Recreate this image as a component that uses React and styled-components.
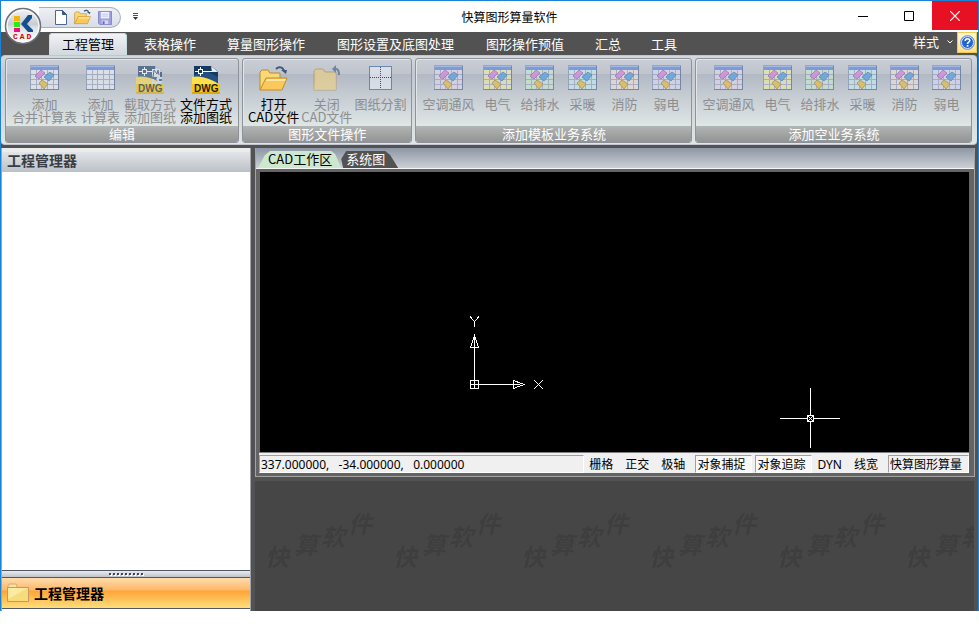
import React from 'react';
import styled, { createGlobalStyle } from 'styled-components';

const MENU_TABS = [
  { label: '工程管理', active: true },
  { label: '表格操作' },
  { label: '算量图形操作', wide: true },
  { label: '图形设置及底图处理', wide: true },
  { label: '图形操作预值', wide: true },
  { label: '汇总' },
  { label: '工具' },
];

const SYSTEMS = [
  { label: '空调通风', tint: '#e6d9ec' },
  { label: '电气', tint: '#f2f0a4' },
  { label: '给排水', tint: '#c8efce' },
  { label: '采暖', tint: '#c6f1f4' },
  { label: '消防', tint: '#f7e2d6' },
  { label: '弱电', tint: '#dcdcf6' },
];

const STATUS_ITEMS = [
  { label: '栅格' },
  { label: '正交' },
  { label: '极轴' },
  { label: '对象捕捉', pressed: true },
  { label: '对象追踪', pressed: true },
  { label: 'DYN' },
  { label: '线宽' },
  { label: '快算图形算量', sunken: true },
];

const TableIcon = ({ tint = '#eef1f8', items = true }) => (
  <svg width='29' height='26' viewBox='0 0 29 26'>
    <rect x='0.5' y='0.5' width='28' height='24' fill={tint} stroke='#7d8fb4' />
    <rect x='1' y='1' width='27' height='4' fill='#4f7fe0' />
    <rect x='1' y='1' width='27' height='1' fill='#8fb0f0' />
    <path
      d='M1 9.5h27M1 14.5h27M1 19.5h27M6.5 5v19M11.5 5v19M17.5 5v19M23.5 5v19'
      stroke='#98a4c0'
      fill='none'
    />
    <path d='M0 24.5h29M28.5 1v24' stroke='#45608a' fill='none' />
    {items && (
      <g>
        <path d='M5 11l6-6 4 3-6 6z' fill='#dc7ce6' stroke='#8e4a9e' strokeWidth='0.8' />
        <path d='M14 12l6-5 4 3-5 6z' fill='#459ceb' stroke='#27619e' strokeWidth='0.8' />
        <path d='M9 18l3-3 6 4-4 5z' fill='#efbc30' stroke='#94731c' strokeWidth='0.8' />
      </g>
    )}
  </svg>
);

const DwgIcon = ({ pick }) => (
  <svg width='28' height='29' viewBox='0 0 28 29'>
    <path d='M2 1h17l7 6v21H2z' fill='#245080' />
    <path d='M2 1h17l7 6v5L14 6 2 10z' fill='#153a62' />
    <path d='M19 1l7 6h-6z' fill='#e8eef4' />
    <path d='M0 12C9 10 20 14 28 20v8H0z' fill='#ffe04a' />
    <path d='M0 19h28v9H0z' fill='#f9c80e' />
    <path d='M0 28h28' stroke='#b88a00' />
    <g stroke='#fff' fill='none'>
      <rect x='6.5' y='4.5' width='4' height='4' />
      <path d='M3 6.5h3M11 6.5h9M8.5 2v2M8.5 9v2' />
    </g>
    {pick && (
      <g>
        <rect x='16' y='4' width='8' height='8' fill='#e9eef8' />
        <path d='M17 12l1-7 3 4 1-4 1 5' stroke='#23406a' fill='none' />
        <path d='M17 14v4h4M26 13h-4v4h4M23 11l-2 4' stroke='#dce6fa' strokeWidth='2' fill='none' />
      </g>
    )}
    <text
      x='2'
      y='27'
      fontFamily='Liberation Sans, Arial, sans-serif'
      fontSize='10'
      fontWeight='bold'
      fill='#1d1a0a'
    >
      DWG
    </text>
  </svg>
);

const OpenFolderIcon = ({ size = 29 }) => (
  <svg width={size} height={size} viewBox='0 0 29 29'>
    <path d='M1 25V7l2-2h6l2 3h10v5' fill='#f9d878' stroke='#b98a2e' />
    <path d='M1 25l6-12h21l-5 12z' fill='#fbc95a' stroke='#c58a25' />
    <path d='M8 14h19l-1 2H7z' fill='#fde7a6' />
    <path d='M17 4c3-3 7-2 8 2' stroke='#3f587c' strokeWidth='2' fill='none' />
    <path d='M22 5h6l-1 4z' fill='#3f587c' />
  </svg>
);

const ClosedFolderIcon = () => (
  <svg width='29' height='29' viewBox='0 0 29 29'>
    <path d='M2 25V6l2-2h7l2 3h11v18z' fill='#efcd78' stroke='#ad8b4a' />
    <path d='M2 25h22V9H4z' fill='#f4d684' opacity='0.7' />
    <path d='M22 4c4-1 5 2 5 6' stroke='#33598e' strokeWidth='2' fill='none' />
    <path d='M24 0v8l-4-4z' fill='#33598e' />
  </svg>
);

const SplitIcon = () => (
  <svg width='23' height='26' viewBox='0 0 23 26'>
    <rect x='0.5' y='1.5' width='22' height='23' fill='#e9eef8' stroke='#2f62a0' />
    <path d='M11.5 2v22M1 12.5h21' stroke='#000' strokeDasharray='1 1' />
  </svg>
);

const PanelFolderIcon = () => (
  <svg width='22' height='20' viewBox='0 0 22 20'>
    <path d='M1 3l1-2h7l1 2v3H1z' fill='#fbe3a4' stroke='#dba66a' />
    <path d='M0.5 4.5h21v14H.5z' fill='#f6dc7c' stroke='#c79a5c' />
    <path d='M1 5h20L1 16z' fill='#fdf0ae' opacity='0.7' />
  </svg>
);

const AppLogo = () => (
  <svg width='38' height='38' viewBox='0 0 38 38'>
    <defs>
      <linearGradient id='orb' x1='0' y1='0' x2='0' y2='1'>
        <stop offset='0' stopColor='#f4f5f7' />
        <stop offset='0.45' stopColor='#c9cdd3' />
        <stop offset='0.55' stopColor='#dfe3e6' />
        <stop offset='1' stopColor='#ffffff' />
      </linearGradient>
    </defs>
    <circle cx='19' cy='19' r='17.5' fill='url(#orb)' stroke='#6c7078' strokeWidth='1.5' />
    <circle cx='19' cy='19' r='16' fill='none' stroke='#fff' />
    <rect x='10' y='9' width='6' height='5' fill='#f5b40a' />
    <rect x='10' y='15' width='6' height='5' fill='#2ee81c' />
    <rect x='10' y='21' width='6' height='4' fill='#f0107c' />
    <path d='M28 8h-4l-7 9 7 8h5v-2l-6-6 5-6z' fill='#14508c' />
    <text
      x='9'
      y='32'
      fontFamily='Liberation Mono, monospace'
      fontSize='8'
      fontWeight='bold'
      letterSpacing='2'
      fill='#e00000'
    >
      CAD
    </text>
  </svg>
);

const App = () => {
  return (
    <>
      <GlobalStyle />
      <Window>
        <TitleBar>
          <LogoButton aria-label='CAD'>
            <AppLogo />
          </LogoButton>
          <QuickArea>
            <QuickAccess>
              <QuickButton aria-label='新建'>
                <svg width='12' height='15' viewBox='0 0 12 15'>
                  <path d='M.5.5h7l4 4v10H.5z' fill='#fff' stroke='#4b6890' />
                  <path d='M7.5.5v4h4z' fill='#3d5a86' stroke='#3d5a86' />
                </svg>
              </QuickButton>
              <QuickButton aria-label='打开'>
                <OpenFolderIcon size={17} />
              </QuickButton>
              <QuickButton aria-label='保存'>
                <svg width='14' height='14' viewBox='0 0 15 15'>
                  <path d='M.5.5h14v14H2L.5 13z' fill='#9ca0de' stroke='#8084c8' />
                  <rect x='3' y='1' width='9' height='7' fill='#edf0fc' />
                  <path d='M4 3.5h7M4 5.5h7' stroke='#c2c8e8' />
                  <rect x='4' y='10' width='7' height='4' fill='#d4d8f0' />
                  <rect x='5' y='11' width='2' height='3' fill='#666bb0' />
                </svg>
              </QuickButton>
            </QuickAccess>
            <QuickButton aria-label='自定义'>
              <svg width='5' height='7' viewBox='0 0 5 7'>
                <path d='M0 .5h5M0 2.5h5' stroke='#555' />
                <path d='M0 4h5L2.5 7z' fill='#333' />
              </svg>
            </QuickButton>
          </QuickArea>
          <Title>快算图形算量软件</Title>
          <WindowButton aria-label='最小化'>
            <svg width='10' height='10' viewBox='0 0 10 10'>
              <path d='M0 5.5h10' stroke='#000' />
            </svg>
          </WindowButton>
          <WindowButton aria-label='最大化'>
            <svg width='10' height='10' viewBox='0 0 10 10'>
              <path d='M.5.5h9v9h-9z' stroke='#000' fill='none' />
            </svg>
          </WindowButton>
          <WindowButton $close aria-label='关闭'>
            <svg width='10' height='10' viewBox='0 0 10 10'>
              <path d='M0 0l10 10M10 0L0 10' stroke='#fff' strokeWidth='1.2' />
            </svg>
          </WindowButton>
        </TitleBar>

        <MenuBar>
          {MENU_TABS.map((tab) => (
            <MenuTab key={tab.label} $active={tab.active} $wide={tab.wide}>
              {tab.label}
            </MenuTab>
          ))}
          <StyleButton>
            样式
            <svg width='6' height='4' viewBox='0 0 6 4'>
              <path d='M.5.5L3 3 5.5.5' stroke='#fff' fill='none' />
            </svg>
          </StyleButton>
          <HelpButton aria-label='帮助'>
            <svg width='15' height='15' viewBox='0 0 15 15'>
              <circle cx='7.5' cy='7.5' r='7' fill='#2464d0' stroke='#96a4bc' />
              <circle cx='7.5' cy='7.5' r='6' fill='none' stroke='#dce8fa' />
              <path
                d='M5.2 6c0-3 4.6-3 4.6-.4C9.8 7.2 7.5 7 7.5 9'
                stroke='#fff'
                strokeWidth='1.6'
                fill='none'
              />
              <rect x='6.7' y='10' width='1.7' height='1.7' fill='#fff' />
            </svg>
          </HelpButton>
        </MenuBar>

        <Ribbon>
          <Group>
            <GroupItems>
              <Tool disabled>
                <TableIcon />
                <ToolLabel>添加<br />合并计算表</ToolLabel>
              </Tool>
              <Tool disabled>
                <TableIcon items={false} />
                <ToolLabel>添加<br />计算表</ToolLabel>
              </Tool>
              <Tool disabled>
                <DwgIcon pick />
                <ToolLabel>截取方式<br />添加图纸</ToolLabel>
              </Tool>
              <Tool>
                <DwgIcon />
                <ToolLabel>文件方式<br />添加图纸</ToolLabel>
              </Tool>
            </GroupItems>
            <GroupCaption>编辑</GroupCaption>
          </Group>
          <Group>
            <GroupItems>
              <Tool $tight>
                <OpenFolderIcon />
                <ToolLabel>打开<br />CAD文件</ToolLabel>
              </Tool>
              <Tool $tight disabled>
                <ClosedFolderIcon />
                <ToolLabel>关闭<br />CAD文件</ToolLabel>
              </Tool>
              <Tool $tight disabled>
                <SplitIcon />
                <ToolLabel>图纸分割</ToolLabel>
              </Tool>
            </GroupItems>
            <GroupCaption>图形文件操作</GroupCaption>
          </Group>
          {['添加模板业务系统', '添加空业务系统'].map((caption) => (
            <Group key={caption}>
              <GroupItems>
                {SYSTEMS.map((item) => (
                  <Tool key={item.label} disabled>
                    <TableIcon tint={item.tint} />
                    <ToolLabel>{item.label}</ToolLabel>
                  </Tool>
                ))}
              </GroupItems>
              <GroupCaption>{caption}</GroupCaption>
            </Group>
          ))}
        </Ribbon>

        <Body>
          <SidePanel>
            <SideHeader>工程管理器</SideHeader>
            <SideContent />
            <Gripper>
              <svg width='35' height='3' viewBox='0 0 35 3'>
                <path d='M1 2h35' stroke='#fff' strokeWidth='2' strokeDasharray='2 2' />
                <path d='M0 1h34' stroke='#3c4658' strokeWidth='2' strokeDasharray='2 2' />
              </svg>
            </Gripper>
            <SideButton>
              <PanelFolderIcon />
              工程管理器
            </SideButton>
          </SidePanel>

          <Workspace>
            <DocFrame>
              <DocTabs>
                <DocTab $active>CAD工作区</DocTab>
                <DocTab>系统图</DocTab>
              </DocTabs>
              <DocInner>
                <Canvas>
                  <UcsIcon width='74' height='74' viewBox='0 0 74 74'>
                    <g stroke='#fff' fill='none' shapeRendering='crispEdges'>
                      <rect x='.5' y='64.5' width='8' height='8' />
                      <path d='M4.5 21v52M0 68.5h50' />
                      <path d='M.5 31.5L4.5 20l4 11.5z' />
                      <path d='M43.5 64.5L54 68.5l-10.5 4z' />
                      <path d='M0 .5l4.5 5 4.5-5M4.5 5v6' />
                      <path d='M64 64l9 9M73 64l-9 9' />
                    </g>
                  </UcsIcon>
                  <Crosshair width='60' height='60' viewBox='0 0 60 60'>
                    <g stroke='#fff' fill='none' shapeRendering='crispEdges'>
                      <path d='M30.5 0v27M30.5 34v26M0 30.5h27M34 30.5h26' />
                      <rect x='27.5' y='27.5' width='6' height='6' />
                      <path d='M28 28l5 5M33 28l-5 5' />
                    </g>
                  </Crosshair>
                </Canvas>
                <StatusBar>
                  <Coordinates>
                    337.000000,&nbsp;&nbsp; -34.000000,&nbsp;&nbsp; 0.000000
                  </Coordinates>
                  {STATUS_ITEMS.map((item) => (
                    <StatusButton
                      key={item.label}
                      aria-pressed={!!item.pressed}
                      $pressed={item.pressed}
                      $sunken={item.sunken}
                    >
                      {item.label}
                    </StatusButton>
                  ))}
                </StatusBar>
              </DocInner>
            </DocFrame>
            <Backdrop>
              <svg width='100%' height='100%'>
                <defs>
                  <pattern id='mark' width='128' height='134' patternUnits='userSpaceOnUse'>
                    <text
                      x='10 39 66 93'
                      y='85 73 65 52'
                      fontFamily='Noto Sans CJK SC, sans-serif'
                      fontSize='24'
                      fontStyle='italic'
                      fontWeight='bold'
                      fill='#3e3e3e'
                    >
                      快算软件
                    </text>
                  </pattern>
                </defs>
                <rect width='100%' height='100%' fill='url(#mark)' />
              </svg>
            </Backdrop>
          </Workspace>
        </Body>
      </Window>
    </>
  );
};

const GlobalStyle = createGlobalStyle`
  * {
    box-sizing: border-box;
  }
  body {
    margin: 0;
    background: #fff;
    font-family: 'Noto Sans CJK SC', sans-serif;
    font-size: 13px;
  }
  button {
    margin: 0;
    padding: 0;
    border: 0;
    background: none;
    font: inherit;
    color: inherit;
    white-space: nowrap;
  }
  svg {
    display: block;
    flex: none;
  }
`;

const Window = styled.div`
  display: flex;
  flex-direction: column;
  min-height: calc(100vh - 24px);
  border: 1px solid #1883d7;
  border-bottom: 0;
  background: #525252;
`;

const TitleBar = styled.header`
  position: relative;
  display: flex;
  height: 31px;
  background: #fff;
`;

const LogoButton = styled.button`
  position: absolute;
  left: 3px;
  top: 6px;
  z-index: 2;
`;

const QuickArea = styled.div`
  display: flex;
  align-items: center;
  gap: 12px;
  width: 178px;
  padding-left: 38px;
`;

const QuickAccess = styled.div`
  display: flex;
  align-items: center;
  gap: 7px;
  height: 21px;
  margin-top: 2px;
  padding: 0 8px 0 16px;
  border: 1px solid #a9b0bc;
  border-left: 0;
  border-radius: 0 11px 11px 0;
  background: linear-gradient(#eef0f4, #d9dde4);
`;

const QuickButton = styled.button`
  display: flex;
  align-items: center;
`;

const Title = styled.div`
  flex: 1;
  text-align: center;
  font-size: 12px;
  line-height: 32px;
`;

const WindowButton = styled.button`
  display: flex;
  align-items: center;
  justify-content: center;
  width: 46px;
  height: 29px;
  background: ${(props) => (props.$close ? '#e81123' : 'transparent')};
`;

const MenuBar = styled.nav`
  display: flex;
  align-items: flex-end;
  height: 23px;
  padding: 0 1px 0 46px;
  background: #525252;
  color: #fff;
`;

const MenuTab = styled.button`
  height: 22px;
  padding: ${(props) => (props.$wide ? '0 16px' : '0 15px')};
  line-height: 20px;
  ${(props) =>
    props.$active &&
    `
    margin: 0 2px;
    padding: 0 13px;
    border-radius: 4px 4px 0 0;
    background: linear-gradient(#f2f4f6, #d3d7de);
    box-shadow: inset 0 0 0 1px #c8dede;
    color: #000;
  `}
`;

const StyleButton = styled.button`
  display: flex;
  align-items: center;
  gap: 8px;
  margin-left: auto;
  padding-right: 4px;
  line-height: 26px;
`;

const HelpButton = styled.button`
  display: flex;
  align-items: center;
  justify-content: center;
  width: 20px;
  height: 21px;
  margin-bottom: 2px;
  border: 1px solid #f0c850;
  background: linear-gradient(#fff8dc, #ffe08a);
`;

const Ribbon = styled.section`
  display: flex;
  gap: 3px;
  height: 90px;
  margin-right: 1px;
  padding: 2px 4px 1px;
  border: solid #c2c6ce;
  border-width: 1px 0;
  border-radius: 4px;
  background: linear-gradient(#d4d8df, #c3c8d1 20%, #e0e5e6);
`;

const Group = styled.div`
  display: flex;
  flex-direction: column;
  border: 1px solid #8e9299;
  border-radius: 3px;
  background: linear-gradient(#c9cdd6, #bfc4cd 15px, #b3b9c4 15px, #e0e7e6 68px);
  box-shadow: inset 1px 1px 0 #e2e5e9;
  overflow: hidden;
`;

const GroupItems = styled.div`
  display: flex;
  flex: 1;
  padding: 4px 4px 0;
`;

const Tool = styled.button`
  display: grid;
  grid-template-rows: 32px auto;
  align-content: start;
  justify-items: center;
  min-width: 42px;
  padding: ${(props) => (props.$tight ? '2px 1px 0' : '2px 2px 0')};
  color: #000;

  &:disabled {
    color: #8c8e91;
  }
  &:disabled svg {
    opacity: 0.6;
  }
`;

const ToolLabel = styled.span`
  line-height: 13px;
`;

const GroupCaption = styled.div`
  height: 16px;
  background: linear-gradient(#b2b5b5, #929494);
  color: #fff;
  line-height: 15px;
  text-align: center;
`;

const Body = styled.main`
  display: flex;
  flex: 1;
  gap: 4px;
  margin-top: 3px;
`;

const SidePanel = styled.aside`
  display: flex;
  flex-direction: column;
  flex: 0 0 250px;
  border-right: 1px solid #a0a4aa;
  border-left: 1px solid #a0a4aa;
  background: #fff;
`;

const SideHeader = styled.h2`
  height: 24px;
  margin: 0;
  padding-left: 5px;
  border-top: 4px solid #ececec;
  background: linear-gradient(#e2e5e8, #bcc1c8);
  color: #3a3e44;
  font-size: 14px;
  font-weight: bold;
  line-height: 17px;
`;

const SideContent = styled.div`
  flex: 1;
`;

const Gripper = styled.div`
  display: flex;
  align-items: center;
  justify-content: center;
  height: 8px;
  border: solid #4e5866;
  border-width: 1px 0;
  background: linear-gradient(#e8eaed, #c0c4ca);
`;

const SideButton = styled.button`
  display: flex;
  align-items: center;
  gap: 5px;
  height: 31px;
  margin: 0 0 2px;
  padding-left: 5px;
  border-bottom: 1px solid #4e5866;
  background: linear-gradient(#ffdcae, #ffb868 12px, #ffa436 13px, #ffe07c);
  color: #000;
  font-size: 14px;
  font-weight: bold;
`;

const Workspace = styled.div`
  display: flex;
  flex: 1;
  flex-direction: column;
  min-width: 0;
`;

const DocFrame = styled.section`
  display: flex;
  flex: 1;
  flex-direction: column;
  margin-right: 3px;
  border: 1px solid #a4a4a4;
  border-top: 0;
`;

const DocTabs = styled.div`
  display: flex;
  align-items: flex-end;
  height: 21px;
  padding-left: 2px;
  border-bottom: 1px solid #f4f4f4;
  background: linear-gradient(#8d96a4, #ccd0d6);
`;

const DocTab = styled.button`
  height: 17px;
  padding: ${(props) => (props.$active ? '0 9px 3px 10px' : '0 13px 3px 5px')};
  clip-path: ${(props) =>
    props.$active
      ? 'polygon(0 100%, 7px 4px, 12px 0, calc(100% - 10px) 0, calc(100% - 6px) 3px, 100% 100%)'
      : 'polygon(2px 100%, 0 8px, 5px 0, calc(100% - 13px) 0, calc(100% - 8px) 4px, 100% 100%)'};
  background: ${(props) => (props.$active ? '#cce8cf' : '#525252')};
  color: ${(props) => (props.$active ? '#000' : '#fff')};
  line-height: 13px;
`;

const DocInner = styled.div`
  display: flex;
  flex: 1;
  flex-direction: column;
  padding: 3px 5px 3px 3px;
  background: #646464;
`;

const Canvas = styled.div`
  position: relative;
  flex: 1;
  border-left: 1px solid #646464;
  background: #000;
`;

const UcsIcon = styled.svg`
  position: absolute;
  left: 210px;
  top: 144px;
`;

const Crosshair = styled.svg`
  position: absolute;
  right: 129px;
  bottom: 4px;
`;

const StatusBar = styled.footer`
  display: flex;
  gap: 3px;
  height: 21px;
  padding-top: 2px;
  border-top: 1px solid #808080;
  background: #f0f0f0;
  font-family: 'Noto Sans', 'Noto Sans CJK SC', sans-serif;
  font-size: 12px;
  line-height: 17px;
`;

const Coordinates = styled.output`
  flex: 1;
  padding-left: 1px;
  border: 1px solid #fff;
  border-top-color: #a0a0a0;
  border-left-color: #a0a0a0;
`;

const StatusButton = styled.button`
  padding: 0 6px 0 1px;
  border: 1px solid transparent;
  ${(props) =>
    (props.$pressed || props.$sunken) &&
    `
    border-color: #a0a0a0 #fff #fff #a0a0a0;
  `}
  background: ${(props) => (props.$pressed ? '#f8f8f8' : 'transparent')};
`;

const Backdrop = styled.div`
  height: 130px;
  margin: 4px 4px 0 0;
  background: #464646;
`;

export default App;
